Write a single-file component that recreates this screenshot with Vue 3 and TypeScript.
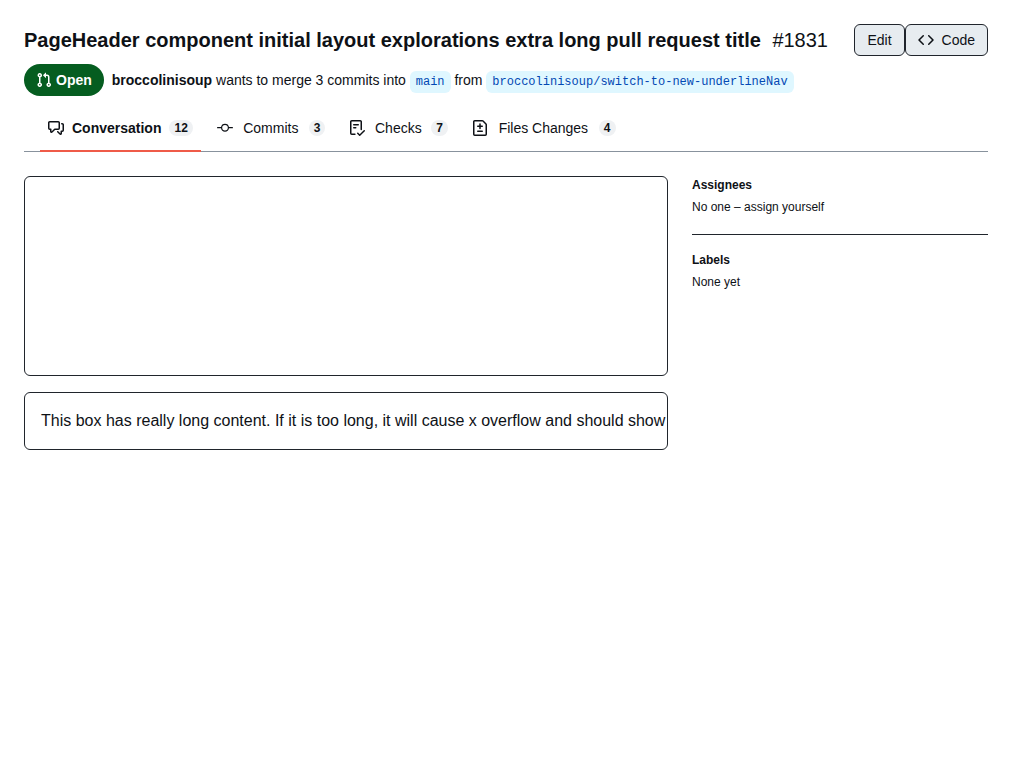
<script setup lang="ts">
import { ref } from 'vue'

interface Tab {
  label: string
  count: number
  path: string
}

const tabs: Tab[] = [
  {
    label: 'Conversation',
    count: 12,
    path: 'M1.75 1h8.5c.966 0 1.75.784 1.75 1.75v5.5A1.75 1.75 0 0 1 10.25 10H7.061l-2.574 2.573A1.458 1.458 0 0 1 2 11.543V10h-.25A1.75 1.75 0 0 1 0 8.25v-5.5C0 1.784.784 1 1.75 1ZM1.5 2.75v5.5c0 .138.112.25.25.25h1a.75.75 0 0 1 .75.75v2.19l2.72-2.72a.749.749 0 0 1 .53-.22h3.5a.25.25 0 0 0 .25-.25v-5.5a.25.25 0 0 0-.25-.25h-8.5a.25.25 0 0 0-.25.25Zm13 2a.25.25 0 0 0-.25-.25h-.5a.75.75 0 0 1 0-1.5h.5c.966 0 1.75.784 1.75 1.75v5.5A1.75 1.75 0 0 1 14.25 12H14v1.543a1.458 1.458 0 0 1-2.487 1.03L9.22 12.28a.749.749 0 0 1 .326-1.275.749.749 0 0 1 .734.215l2.22 2.22v-2.19a.75.75 0 0 1 .75-.75h1a.25.25 0 0 0 .25-.25Z',
  },
  {
    label: 'Commits',
    count: 3,
    path: 'M.6 7.1h3.45a4 4 0 0 1 7.9 0h3.45a.6.6 0 0 1 0 1.2h-3.45a4 4 0 0 1-7.9 0H.6a.6.6 0 0 1 0-1.2ZM10.8 7.7a2.8 2.8 0 1 0-5.6 0 2.8 2.8 0 0 0 5.6 0Z',
  },
  {
    label: 'Checks',
    count: 7,
    path: 'M2.5 1.75v11.5c0 .138.112.25.25.25h3.17a.75.75 0 0 1 0 1.5H2.75A1.75 1.75 0 0 1 1 13.25V1.75C1 .784 1.784 0 2.75 0h8.5C12.216 0 13 .784 13 1.75v7.736a.75.75 0 0 1-1.5 0V1.75a.25.25 0 0 0-.25-.25h-8.5a.25.25 0 0 0-.25.25Zm13.274 9.537v-.001l-4.557 4.45a.75.75 0 0 1-1.055-.008l-1.943-1.95a.75.75 0 0 1 1.062-1.058l1.419 1.425 4.026-3.932a.75.75 0 1 1 1.048 1.074ZM4.75 4h4.5a.75.75 0 0 1 0 1.5h-4.5a.75.75 0 0 1 0-1.5ZM4 7.75A.75.75 0 0 1 4.75 7h2a.75.75 0 0 1 0 1.5h-2A.75.75 0 0 1 4 7.75Z',
  },
  {
    label: 'Files Changes',
    count: 4,
    path: 'M1 1.75C1 .784 1.784 0 2.75 0h7.586c.464 0 .909.184 1.237.513l2.914 2.914c.329.328.513.773.513 1.237v9.586A1.75 1.75 0 0 1 13.25 16H2.75A1.75 1.75 0 0 1 1 14.25Zm1.75-.25a.25.25 0 0 0-.25.25v12.5c0 .138.112.25.25.25h10.5a.25.25 0 0 0 .25-.25V4.664a.25.25 0 0 0-.073-.177l-2.914-2.914a.25.25 0 0 0-.177-.073ZM8 3.25a.75.75 0 0 1 .75.75v1.5h1.5a.75.75 0 0 1 0 1.5h-1.5v1.5a.75.75 0 0 1-1.5 0V7h-1.5a.75.75 0 0 1 0-1.5h1.5V4A.75.75 0 0 1 8 3.25Zm-3 8a.75.75 0 0 1 .75-.75h4.5a.75.75 0 0 1 0 1.5h-4.5a.75.75 0 0 1-.75-.75Z',
  },
]

const selected = ref<string>('Conversation')
</script>

<template>
  <div class="page">
    <header class="header">
      <div class="title-row">
        <h1 class="title">
          PageHeader component initial layout explorations extra long pull request title
          <span class="number">#1831</span>
        </h1>
        <div class="actions">
          <button type="button" class="btn">Edit</button>
          <button type="button" class="btn">
            <svg class="icon" viewBox="0 0 16 16" aria-hidden="true">
              <path d="m11.28 3.22 4.25 4.25a.75.75 0 0 1 0 1.06l-4.25 4.25a.749.749 0 0 1-1.275-.326.749.749 0 0 1 .215-.734L13.94 8l-3.72-3.72a.749.749 0 0 1 .326-1.275.749.749 0 0 1 .734.215Zm-6.56 0a.751.751 0 0 1 1.042.018.751.751 0 0 1 .018 1.042L2.06 8l3.72 3.72a.749.749 0 0 1-.326 1.275.749.749 0 0 1-.734-.215L.47 8.53a.75.75 0 0 1 0-1.06Z" />
            </svg>
            Code
          </button>
        </div>
      </div>

      <div class="summary">
        <span class="state">
          <svg class="icon" viewBox="0 0 16 16" aria-hidden="true">
            <path d="M1.5 3.25a2.25 2.25 0 1 1 3 2.122v5.256a2.251 2.251 0 1 1-1.5 0V5.372A2.25 2.25 0 0 1 1.5 3.25Zm5.677-.177L9.573.677A.25.25 0 0 1 10 .854V2.5h1A2.5 2.5 0 0 1 13.5 5v5.628a2.251 2.251 0 1 1-1.5 0V5a1 1 0 0 0-1-1h-1v1.646a.25.25 0 0 1-.427.177L7.177 3.427a.25.25 0 0 1 0-.354ZM3.75 2.5a.75.75 0 1 0 0 1.5.75.75 0 0 0 0-1.5Zm0 9.5a.75.75 0 1 0 0 1.5.75.75 0 0 0 0-1.5Zm8.25.75a.75.75 0 1 0 1.5 0 .75.75 0 0 0-1.5 0Z" />
          </svg>
          Open
        </span>
        <p class="description">
          <strong>broccolinisoup</strong> wants to merge 3 commits into
          <a class="branch" href="#main">main</a> from
          <a class="branch" href="#head">broccolinisoup/switch-to-new-underlineNav</a>
        </p>
      </div>

      <nav class="nav" aria-label="Pull request">
        <a
          v-for="tab in tabs"
          :key="tab.label"
          href="#"
          class="tab"
          :class="{ selected: tab.label === selected }"
          :aria-current="tab.label === selected ? 'page' : undefined"
          @click.prevent="selected = tab.label"
        >
          <svg class="icon" viewBox="0 0 16 16" aria-hidden="true"><path fill-rule="evenodd" :d="tab.path" /></svg>
          <span class="tab-label" :data-label="tab.label">{{ tab.label }}</span>
          <span class="counter">{{ tab.count }}</span>
        </a>
      </nav>
    </header>

    <div class="body">
      <main class="content">
        <div class="box blank"></div>
        <div class="box text">This box has really long content. If it is too long, it will cause x overflow and should show</div>
      </main>
      <aside class="pane">
        <section class="field">
          <h2>Assignees</h2>
          <p>No one – assign yourself</p>
        </section>
        <section class="field">
          <h2>Labels</h2>
          <p>None yet</p>
        </section>
      </aside>
    </div>
  </div>
</template>

<style>
body {
  background: #fff;
}
</style>

<style scoped>
.page {
  box-sizing: border-box;
  max-width: 1280px;
  margin: 0 auto;
  padding: 24px;
  color: #0e1116;
  font-family: "Liberation Sans", Arial, sans-serif;
  font-size: 14px;
  line-height: 20px;
}

.icon {
  flex: none;
  width: 16px;
  height: 16px;
  fill: currentColor;
}

.header {
  display: flex;
  flex-direction: column;
  gap: 8px;
}

.title-row {
  display: flex;
  justify-content: space-between;
  gap: 8px;
}

.title {
  margin: 0;
  font-size: 20px;
  line-height: 32px;
  font-weight: 600;
}

.number {
  margin-left: 6px;
  font-weight: 400;
}

.actions {
  display: flex;
  flex: none;
}

.btn {
  display: flex;
  align-items: center;
  gap: 8px;
  height: 32px;
  padding: 0 12px;
  border: 1px solid #20252c;
  border-radius: 6px;
  background: #e7ecf0;
  color: #0e1116;
  font: inherit;
  cursor: pointer;
}

.summary {
  display: flex;
  align-items: center;
  gap: 8px;
}

.state {
  display: flex;
  flex: none;
  align-items: center;
  gap: 4px;
  box-sizing: border-box;
  height: 32px;
  padding: 0 12px;
  border-radius: 16px;
  background: #055d20;
  color: #fff;
  font-weight: 600;
}

.description {
  margin: 0;
  line-height: 24px;
}

.branch {
  display: inline-block;
  padding: 2px 6px;
  border-radius: 6px;
  background: #dff7ff;
  color: #0349b4;
  font-family: "Liberation Mono", monospace;
  font-size: 12px;
  line-height: 18px;
  text-decoration: none;
}

.nav {
  display: flex;
  gap: 8px;
  padding: 0 16px;
  box-shadow: inset 0 -1px #88929d;
}

.tab {
  display: flex;
  align-items: center;
  gap: 8px;
  box-sizing: border-box;
  height: 48px;
  padding: 2px 8px 0;
  border-bottom: 2px solid transparent;
  color: inherit;
  text-decoration: none;
}

.tab.selected {
  border-color: #ef5b48;
  font-weight: 600;
}

.tab-label {
  text-align: center;
}

/* Reserves the bold width so that tabs keep their place when selected. */
.tab-label::after {
  content: attr(data-label);
  display: block;
  height: 0;
  overflow: hidden;
  visibility: hidden;
  font-weight: 600;
}

.counter {
  padding: 0 5px;
  border-radius: 8px;
  background: #eff1f3;
  font-size: 12px;
  line-height: 16px;
  font-weight: 600;
  text-align: center;
}

.body {
  display: flex;
  align-items: flex-start;
  gap: 24px;
  margin-top: 24px;
}

.content {
  display: flex;
  flex: 1;
  flex-direction: column;
  gap: 16px;
  min-width: 0;
}

.box {
  border: 1px solid #20252c;
  border-radius: 6px;
}

.blank {
  min-height: 198px;
}

.text {
  padding: 16px;
  overflow: hidden;
  font-size: 16px;
  line-height: 24px;
  white-space: nowrap;
}

.pane {
  flex: none;
  width: 296px;
  font-size: 12px;
  line-height: 18px;
}

.field + .field {
  margin-top: 18px;
  padding-top: 16px;
  border-top: 1px solid #20252c;
}

.field h2 {
  margin: 0 0 4px;
  font-size: 12px;
  font-weight: 600;
}

.field p {
  margin: 0;
}
</style>
